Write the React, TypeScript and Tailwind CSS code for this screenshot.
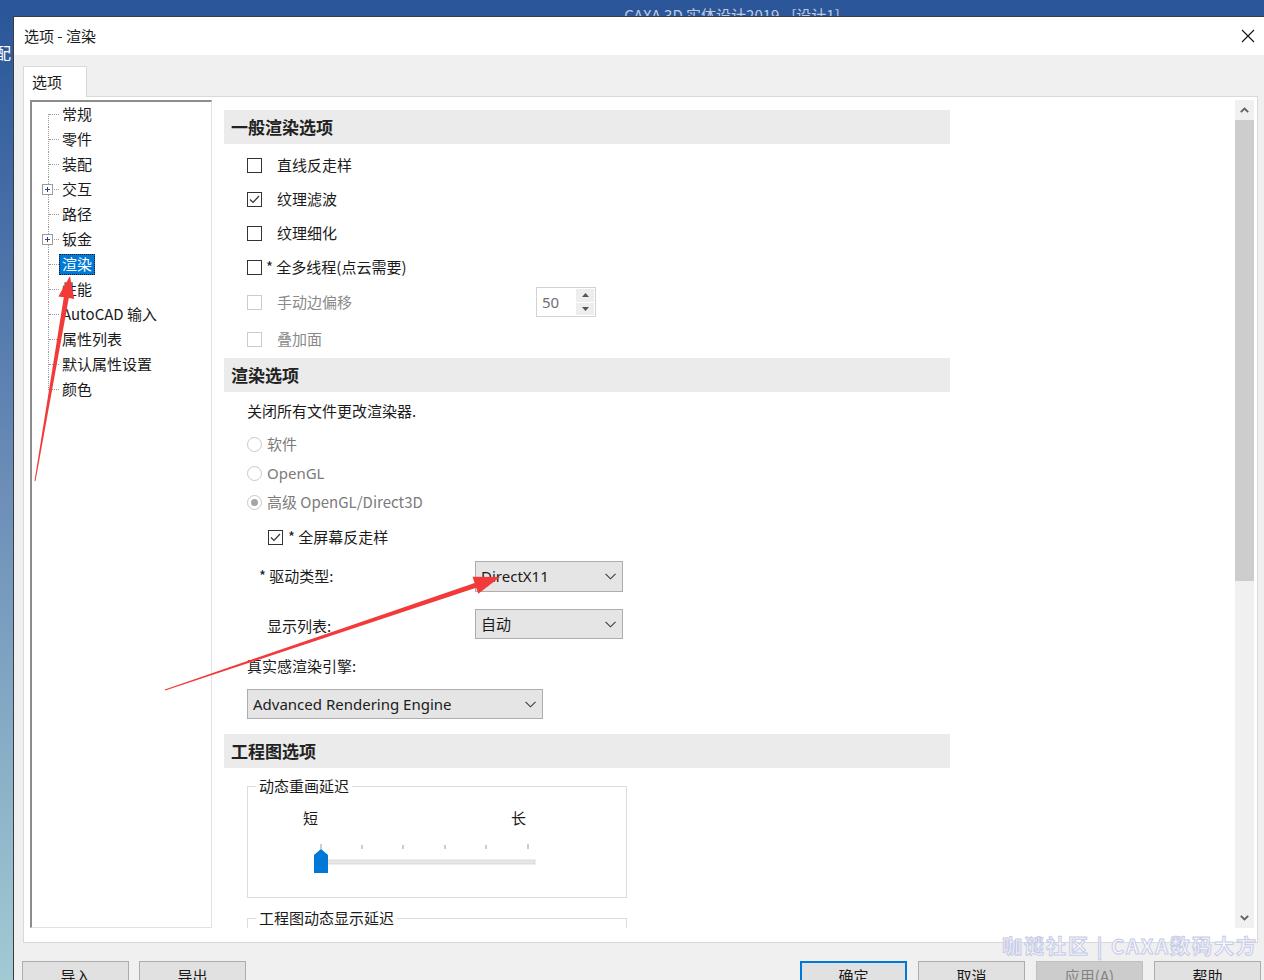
import React from "react"

const treeItems = [
    { label: "常规" },
    { label: "零件" },
    { label: "装配" },
    { label: "交互", plus: true },
    { label: "路径" },
    { label: "钣金", plus: true },
    { label: "渲染", selected: true },
    { label: "性能" },
    { label: "AutoCAD 输入" },
    { label: "属性列表" },
    { label: "默认属性设置" },
    { label: "颜色" },
]

function PlusBox() {
    return (
        <svg width="11" height="11" viewBox="0 0 11 11" className="absolute left-[10px] top-[7px] bg-white">
            <rect x="0.5" y="0.5" width="10" height="10" fill="#fff" stroke="#9a9a9a" />
            <path d="M3 5.5h5M5.5 3v5" stroke="#2d3f8f" strokeWidth="1" />
        </svg>
    )
}

function Tree() {
    return (
        <div className="w-[182px] h-[828px] shrink-0 bg-white border-l-2 border-t-2 border-[#8c8c8c] border-r border-b border-r-[#e2e2e2] border-b-[#e2e2e2]">
            {treeItems.map((item, i) => (
                <div key={item.label} className="flex h-[25px] items-center">
                    <div className="relative w-[30px] h-full">
                        <span
                            className={`absolute left-[16px] w-0 border-l border-dotted border-[#9a9a9a] ${
                                i === 0 ? "top-[12px] bottom-0" : i === treeItems.length - 1 ? "top-0 h-[13px]" : "top-0 bottom-0"
                            }`}
                        />
                        <span className="absolute left-[17px] top-[12px] w-[10px] h-0 border-t border-dotted border-[#9a9a9a]" />
                        {item.plus && <PlusBox />}
                    </div>
                    {item.selected ? (
                        <span className="-ml-[3px] h-[21px] px-[2px] flex items-center bg-[#0078d7] text-white border border-dotted border-[#1c1c1c]">
                            {item.label}
                        </span>
                    ) : (
                        <span className="whitespace-nowrap">{item.label}</span>
                    )}
                </div>
            ))}
        </div>
    )
}

function Checkbox({ checked = false, disabled = false }: { checked?: boolean; disabled?: boolean }) {
    return (
        <span
            className={`w-[15px] h-[15px] shrink-0 border bg-white flex items-center justify-center ${
                disabled ? "border-[#cccccc]" : "border-[#333333]"
            }`}
        >
            {checked && (
                <svg width="13" height="13" viewBox="0 0 13 13">
                    <path d="M2 6.5l3 3 6-6.5" fill="none" stroke="#333" strokeWidth="1.2" />
                </svg>
            )}
        </span>
    )
}

function Radio({ checked = false }: { checked?: boolean }) {
    return (
        <span className="w-[15px] h-[15px] shrink-0 rounded-full border border-[#c8c8c8] bg-white flex items-center justify-center">
            {checked && <span className="w-[7px] h-[7px] rounded-full bg-[#a6a6a6]" />}
        </span>
    )
}

function Chevron() {
    return (
        <svg width="11" height="7" viewBox="0 0 11 7" className="shrink-0">
            <path d="M0.5 0.8l5 5 5-5" fill="none" stroke="#3a3a3a" strokeWidth="1.1" />
        </svg>
    )
}

function Select({ value, width }: { value: string; width: string }) {
    return (
        <div className={`${width} h-full bg-[#e5e5e5] border border-[#adadad] flex items-center justify-between pl-[5px] pr-[6px]`}>
            <span className="font-['Noto_Sans','Noto_Sans_CJK_SC',sans-serif] whitespace-nowrap">{value}</span>
            <Chevron />
        </div>
    )
}

function SectionHeader({ title, className = "" }: { title: string; className?: string }) {
    return (
        <div className={`w-[726px] h-[34px] bg-[#ebebeb] pl-[7px] flex items-center text-[17px] font-bold text-[#222] ${className}`}>
            {title}
        </div>
    )
}

function Spinner() {
    return (
        <div className="w-[60px] h-[30px] border border-[#d2d2d2] bg-white flex">
            <span className="flex-1 pl-[5px] flex items-center text-[#707070] font-['Noto_Sans',sans-serif]">50</span>
            <div className="w-[19px] flex flex-col gap-px py-[1px] pr-[1px]">
                <span className="flex-1 bg-[#ededed] flex items-center justify-center">
                    <svg width="7" height="4" viewBox="0 0 7 4"><path d="M0 4L3.5 0 7 4z" fill="#555" /></svg>
                </span>
                <span className="flex-1 bg-[#ededed] flex items-center justify-center">
                    <svg width="7" height="4" viewBox="0 0 7 4"><path d="M0 0L3.5 4 7 0z" fill="#555" /></svg>
                </span>
            </div>
        </div>
    )
}

function Slider() {
    const ticks = [11, 52, 93, 135, 176, 218]
    return (
        <svg width="230" height="32" viewBox="0 0 230 32" className="ml-[62px] mt-[15px]">
            {ticks.map((x, i) => (
                <rect key={x} x={x - 0.5} y={i === 0 || i === ticks.length - 1 ? 0 : 1} width="1" height={i === 0 || i === ticks.length - 1 ? 5 : 4} fill="#9a9a9a" />
            ))}
            <rect x="11" y="16" width="214" height="4" fill="#e7e7e7" stroke="#d4d4d4" strokeWidth="0.8" />
            <path d="M11 5L18 11V29H4V11Z" fill="#0078d7" />
        </svg>
    )
}

function Content() {
    return (
        <div className="w-[1023px] h-[828px] shrink-0 overflow-hidden pt-[10px] pl-[12px]">
            <SectionHeader title="一般渲染选项" />
            <div className="mt-[4px] flex flex-col">
                <div className="h-[34px] flex items-center pl-[23px]">
                    <Checkbox />
                    <span className="ml-[15px]">直线反走样</span>
                </div>
                <div className="h-[34px] flex items-center pl-[23px]">
                    <Checkbox checked />
                    <span className="ml-[15px]">纹理滤波</span>
                </div>
                <div className="h-[34px] flex items-center pl-[23px]">
                    <Checkbox />
                    <span className="ml-[15px]">纹理细化</span>
                </div>
                <div className="h-[34px] flex items-center pl-[23px]">
                    <Checkbox />
                    <span className="ml-[4px]">* 全多线程(点云需要)</span>
                </div>
                <div className="h-[36px] flex items-center pl-[23px]">
                    <Checkbox disabled />
                    <span className="ml-[15px] w-[259px] text-[#8a8a8a]">手动边偏移</span>
                    <Spinner />
                </div>
                <div className="h-[38px] flex items-center pl-[23px]">
                    <Checkbox disabled />
                    <span className="ml-[15px] text-[#8a8a8a]">叠加面</span>
                </div>
            </div>

            <SectionHeader title="渲染选项" />
            <div className="mt-[2px] h-[34px] flex items-center pl-[23px]">关闭所有文件更改渲染器.</div>
            <div className="mt-[2px] flex flex-col text-[#7b7b7b]">
                <div className="h-[29px] flex items-center pl-[23px]">
                    <Radio />
                    <span className="ml-[5px]">软件</span>
                </div>
                <div className="h-[29px] flex items-center pl-[23px]">
                    <Radio />
                    <span className="ml-[5px] font-['Noto_Sans',sans-serif]">OpenGL</span>
                </div>
                <div className="h-[29px] flex items-center pl-[23px]">
                    <Radio checked />
                    <span className="ml-[5px]">高级 OpenGL/Direct3D</span>
                </div>
            </div>
            <div className="mt-[3px] h-[34px] flex items-center pl-[44px]">
                <Checkbox checked />
                <span className="ml-[5px]">* 全屏幕反走样</span>
            </div>
            <div className="mt-[7px] h-[31px] flex items-center">
                <span className="w-[251px] pl-[35px]">* 驱动类型:</span>
                <Select value="DirectX11" width="w-[148px]" />
            </div>
            <div className="mt-[17px] h-[30px] flex items-center">
                <span className="w-[251px] pl-[43px] pt-[5px]">显示列表:</span>
                <Select value="自动" width="w-[148px]" />
            </div>
            <div className="mt-[13px] h-[28px] flex items-center pl-[23px]">真实感渲染引擎:</div>
            <div className="mt-[9px] h-[30px] pl-[23px] flex">
                <Select value="Advanced Rendering Engine" width="w-[296px]" />
            </div>

            <SectionHeader title="工程图选项" className="mt-[15px]" />
            <div className="mt-[18px] ml-[23px] w-[380px] h-[112px] border border-[#dcdcdc] relative">
                <span className="absolute -top-[12px] left-[8px] bg-white px-[3px] leading-[22px]">动态重画延迟</span>
                <div className="pt-[20px] flex leading-[22px]">
                    <span className="ml-[55px]">短</span>
                    <span className="ml-[193px]">长</span>
                </div>
                <Slider />
            </div>
            <div className="mt-[20px] ml-[23px] w-[380px] h-[40px] border-t border-l border-r border-[#dcdcdc] relative">
                <span className="absolute -top-[12px] left-[8px] bg-white px-[3px] leading-[22px]">工程图动态显示延迟</span>
            </div>
        </div>
    )
}

function Scrollbar() {
    return (
        <div className="w-[19px] h-[828px] shrink-0 bg-[#f0f0f0] flex flex-col">
            <div className="h-[20px] flex items-center justify-center">
                <svg width="9" height="6" viewBox="0 0 9 6"><path d="M0.8 5.2L4.5 1.5 8.2 5.2" fill="none" stroke="#606060" strokeWidth="1.8" /></svg>
            </div>
            <div className="h-[461px] bg-[#cdcdcd]" />
            <div className="flex-1" />
            <div className="h-[20px] flex items-center justify-center">
                <svg width="9" height="6" viewBox="0 0 9 6"><path d="M0.8 0.8L4.5 4.5 8.2 0.8" fill="none" stroke="#606060" strokeWidth="1.8" /></svg>
            </div>
        </div>
    )
}

function Button({ label, kind = "normal" }: { label: string; kind?: "normal" | "primary" | "disabled" }) {
    const styles =
        kind === "primary"
            ? "border-2 border-[#0078d7] bg-[#e1e1e1]"
            : kind === "disabled"
            ? "border border-[#bfbfbf] bg-[#cccccc] text-[#838383]"
            : "border border-[#adadad] bg-[#e1e1e1]"
    return <div className={`w-[107px] h-[30px] flex items-center justify-center shrink-0 ${styles}`}>{label}</div>
}

function Arrows() {
    return (
        <svg width="1264" height="980" viewBox="0 0 1264 980" className="absolute left-0 top-0 pointer-events-none">
            <polygon
                points="34.5,480.9 63.8,297.3 58.4,296.4 70,276 74.2,299 68.8,298.1 35.5,481.1"
                fill="#f33a3a"
            />
            <polygon
                points="164.8,689.5 474.6,582.9 472.5,576.8 500,577 478.3,593.8 476.2,587.7 165.2,690.5"
                fill="#f33a3a"
            />
        </svg>
    )
}

export default function App() {
    return (
        <div className="relative w-[1264px] h-[980px] overflow-hidden bg-[#2b579a] text-[15px] text-[#1b1b1b] font-['Noto_Sans_CJK_SC','Noto_Sans',sans-serif]">
            {/* host app title bar */}
            <div className="h-[16px] overflow-hidden flex justify-center">
                <span className="pl-[200px] pt-[5px] text-[15px] leading-[20px] text-white/70 whitespace-nowrap">CAXA 3D 实体设计2019 - [设计1]</span>
            </div>

            <div className="flex h-[964px]">
                <div className="w-[13px] shrink-0 overflow-hidden bg-linear-to-b from-[#2b579a] via-[#6d8fb8] to-[#a2cad3]">
                    <div className="mt-[26px] -ml-[5px] text-[16px] leading-[20px] text-white">配</div>
                </div>

                {/* dialog */}
                <div className="flex-1 flex flex-col border-l border-t border-[#3c3c3c] overflow-hidden">
                    <div className="h-[38px] shrink-0 bg-white flex items-center justify-between pl-[10px] pr-[9px]">
                        <span>选项 - 渲染</span>
                        <svg width="14" height="14" viewBox="0 0 14 14">
                            <path d="M1 1l12 12M13 1L1 13" stroke="#111" strokeWidth="1.1" />
                        </svg>
                    </div>
                    <div className="flex-1 min-h-0 bg-[#f0f0f0] pt-[11px] pl-[9px] flex flex-col">
                        <div className="flex shrink-0">
                            <div className="relative z-10 -mb-px w-[64px] h-[31px] bg-white border border-b-0 border-[#d9d9d9] flex items-center pl-[8px]">
                                选项
                            </div>
                        </div>
                        <div className="w-[1235px] h-[847px] shrink-0 bg-white border border-[#d9d9d9] flex pt-[3px] pl-[6px]">
                            <Tree />
                            <Content />
                            <Scrollbar />
                        </div>
                        <div className="mt-[18px] -ml-px pr-[3px] flex shrink-0">
                            <div className="flex gap-[10px]">
                                <Button label="导入" />
                                <Button label="导出" />
                            </div>
                            <div className="flex-1" />
                            <div className="flex gap-[11px]">
                                <Button label="确定" kind="primary" />
                                <Button label="取消" />
                                <Button label="应用(A)" kind="disabled" />
                                <Button label="帮助" />
                            </div>
                        </div>
                    </div>
                </div>
            </div>

            <Arrows />

            <div className="absolute left-[1002px] top-[933px] text-[20px] leading-[26px] font-bold tracking-[2px] whitespace-nowrap text-[#f6f7fc] [-webkit-text-stroke:1px_#c6cbe6]">
                咖谜社区 | CAXA数码大方
            </div>
        </div>
    )
}
